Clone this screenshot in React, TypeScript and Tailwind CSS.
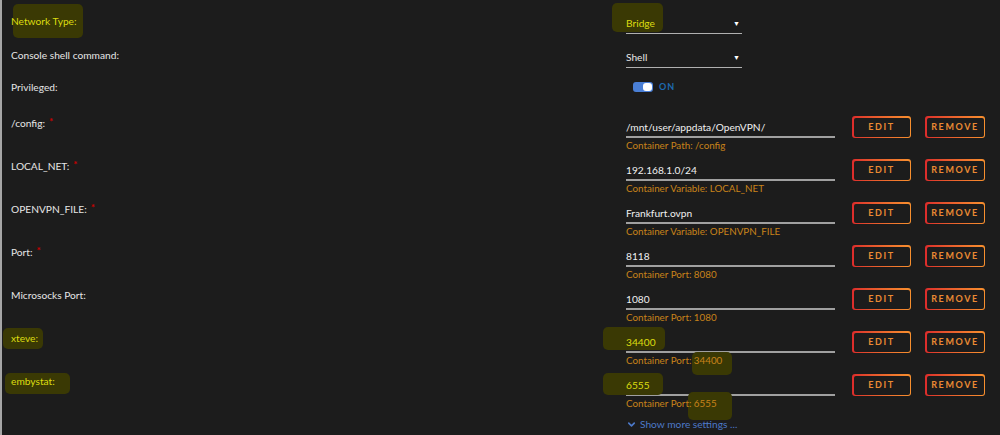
import { ChevronDown } from 'lucide-react'

type Mark = { left: number; top: number; w: number; h: number }

interface PathRow {
  label: string
  required?: boolean
  value: string
  hint: string
  hot?: boolean
  valueMark?: Mark
  hintMark?: Mark
  labelMark?: Mark
}

const rows: PathRow[] = [
  { label: '/config:', required: true, value: '/mnt/user/appdata/OpenVPN/', hint: 'Container Path: /config' },
  { label: 'LOCAL_NET:', required: true, value: '192.168.1.0/24', hint: 'Container Variable: LOCAL_NET' },
  { label: 'OPENVPN_FILE:', required: true, value: 'Frankfurt.ovpn', hint: 'Container Variable: OPENVPN_FILE' },
  { label: 'Port:', required: true, value: '8118', hint: 'Container Port: 8080' },
  { label: 'Microsocks Port:', value: '1080', hint: 'Container Port: 1080' },
  {
    label: 'xteve:',
    value: '34400',
    hint: 'Container Port: 34400',
    hot: true,
    labelMark: { left: -8, top: -4, w: 40, h: 21 },
    valueMark: { left: -23, top: -8, w: 62, h: 23 },
    hintMark: { left: 66, top: -2, w: 40, h: 23 },
  },
  {
    label: 'embystat:',
    value: '6555',
    hint: 'Container Port: 6555',
    hot: true,
    labelMark: { left: -6, top: -2, w: 65, h: 21 },
    valueMark: { left: -23, top: -5, w: 60, h: 22 },
    hintMark: { left: 62, top: -5, w: 44, h: 28 },
  },
]

// yellow marker stroke laid over annotated text
function Marker({ m }: { m: Mark }) {
  return (
    <span
      className="absolute rounded-[5px] bg-[#3a3904]"
      style={{ left: m.left, top: m.top, width: m.w, height: m.h }}
    />
  )
}

function Select({ value, hot, mark }: { value: string; hot?: boolean; mark?: Mark }) {
  return (
    <div className="relative flex w-[116px] items-center justify-between border-b border-[#b0b0b0] pb-[2px] leading-[14px]">
      {mark && <Marker m={mark} />}
      <span className={`relative ${hot ? 'text-[#dcdc10]' : 'text-[#e6e6e6]'}`}>{value}</span>
      <span className="mr-[2px] text-[7px] text-white">▼</span>
    </div>
  )
}

function OutlineButton({ children, width }: { children: string; width: string }) {
  return (
    <div className={`h-[22px] rounded-[3px] bg-gradient-to-r from-[#dc2b2b] to-[#f8902e] p-[1.5px] ${width}`}>
      <div className="flex h-full items-center justify-center rounded-[2px] bg-[#1c1c1c] text-[9px] font-bold tracking-[1.6px] text-[#ea8a33]">
        {children}
      </div>
    </div>
  )
}

export default function App() {
  return (
    <div className="h-[435px] w-[1000px] overflow-hidden border-l-2 border-[#a6a6a6] bg-[#1c1c1c] pl-[9px] font-['Lato',sans-serif] text-[10.2px] text-[#e6e6e6]">
      {/* network type */}
      <div className="flex h-[34px] pt-[14px]">
        <div className="w-[615px] leading-[14px]">
          <span className="relative">
            <Marker m={{ left: 2, top: -11, w: 70, h: 34 }} />
            <span className="relative text-[#dcdc10]">Network Type:</span>
          </span>
        </div>
        <Select value="Bridge" hot mark={{ left: -14, top: -11, w: 51, h: 29 }} />
      </div>

      {/* console */}
      <div className="flex h-[34px] pt-[14px]">
        <div className="w-[615px] leading-[14px]">Console shell command:</div>
        <Select value="Shell" />
      </div>

      {/* privileged */}
      <div className="flex h-[45px] pt-[12px]">
        <div className="w-[615px] leading-[14px]">Privileged:</div>
        <div className="flex h-[14px] items-center pl-[7px]">
          <div className="flex h-[10px] w-[20px] items-center justify-end rounded-[3px] bg-[#4a7fd6] pr-[1px]">
            <div className="h-[8px] w-[9px] rounded-[3px] bg-white" />
          </div>
          <span className="ml-[6px] text-[9px] font-bold tracking-[1px] text-[#1e6ab0]">ON</span>
        </div>
      </div>

      {/* mapped paths, variables and ports */}
      {rows.map((r) => (
        <div key={r.label} className="flex h-[43px] items-start">
          <div className="w-[615px] pt-[3px] leading-[14px]">
            <span className="relative">
              {r.labelMark && <Marker m={r.labelMark} />}
              <span className={`relative ${r.hot ? 'text-[#dcdc10]' : ''}`}>{r.label}</span>
              {r.required && <span className="relative -top-[2px] ml-[4px] text-[10px] font-bold text-[#c80000]">*</span>}
            </span>
          </div>
          <div className="w-[226px] pt-[7px]">
            <div className="relative w-[209px] border-b-2 border-[#a0a0a0] pb-[2px] leading-[14px]">
              {r.valueMark && <Marker m={r.valueMark} />}
              <span className={`relative ${r.hot ? 'text-[#dcdc10]' : 'text-[#f0f0f0]'}`}>{r.value}</span>
            </div>
            <div className="relative mt-[1px] text-[9.8px] leading-[12px] text-[#c8831a]">
              {r.hintMark && <Marker m={r.hintMark} />}
              <span className="relative">{r.hint}</span>
            </div>
          </div>
          <div className="flex items-start gap-[14px] pt-[3px]">
            <OutlineButton width="w-[59px]">EDIT</OutlineButton>
            <OutlineButton width="w-[60px]">REMOVE</OutlineButton>
          </div>
        </div>
      ))}

      {/* more settings */}
      <div className="flex pt-[4px]">
        <div className="w-[615px]" />
        <div className="flex items-center gap-[3px] leading-[12px] text-[#4c79c8]">
          <ChevronDown size={11} strokeWidth={3.5} />
          <span>Show more settings ...</span>
        </div>
      </div>
    </div>
  )
}
